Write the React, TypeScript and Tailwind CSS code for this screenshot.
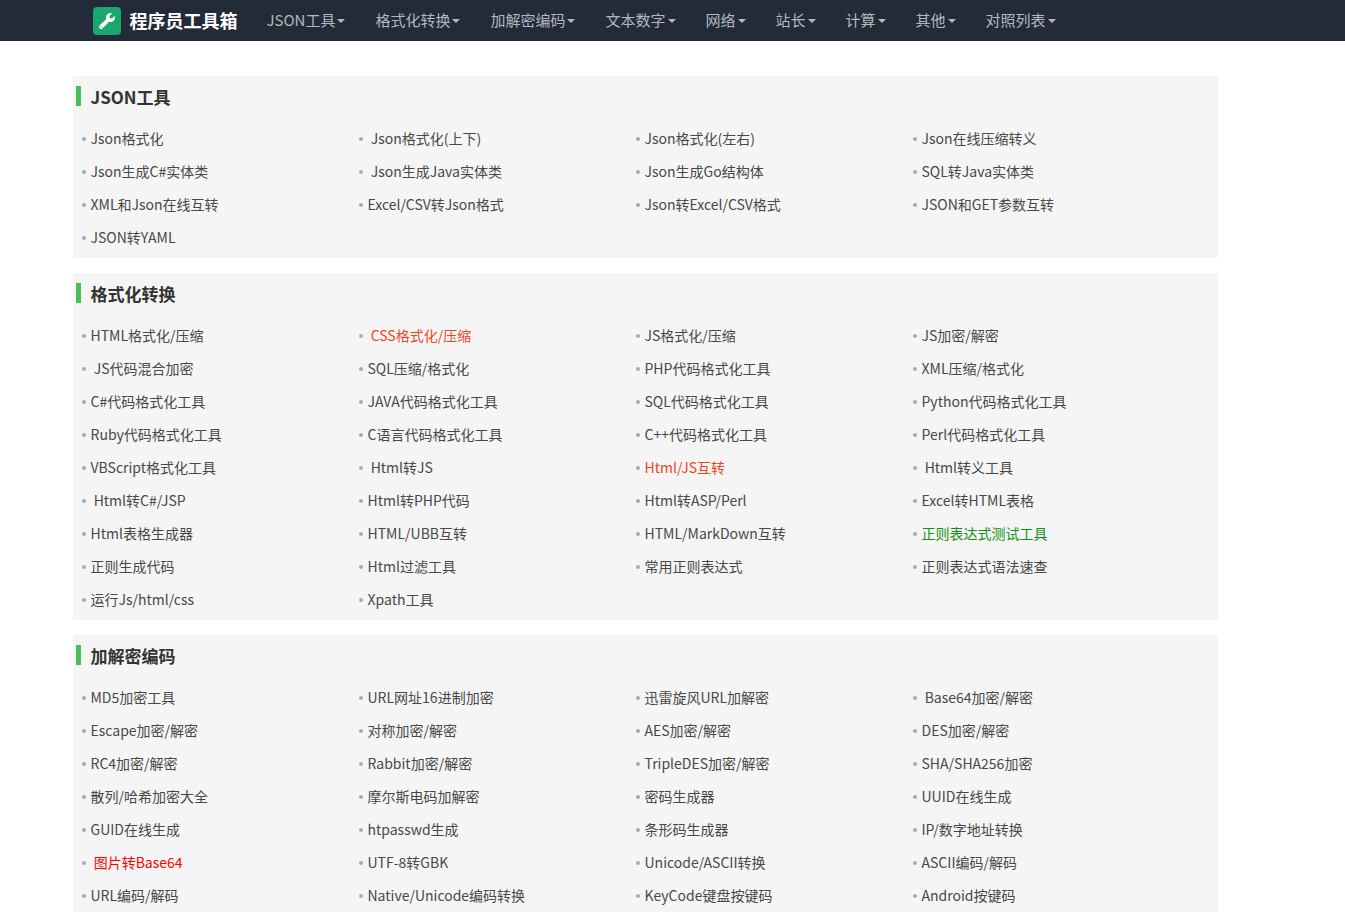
import { FaWrench } from 'react-icons/fa';

type Item = { text: string; color?: string };

const navItems = ['JSON工具', '格式化转换', '加解密编码', '文本数字', '网络', '站长', '计算', '其他', '对照列表'];

const sections: { title: string; items: Item[] }[] = [
  {
    title: 'JSON工具',
    items: [
      { text: 'Json格式化' },
      { text: ' Json格式化(上下)' },
      { text: 'Json格式化(左右)' },
      { text: 'Json在线压缩转义' },
      { text: 'Json生成C#实体类' },
      { text: ' Json生成Java实体类' },
      { text: 'Json生成Go结构体' },
      { text: 'SQL转Java实体类' },
      { text: 'XML和Json在线互转' },
      { text: 'Excel/CSV转Json格式' },
      { text: 'Json转Excel/CSV格式' },
      { text: 'JSON和GET参数互转' },
      { text: 'JSON转YAML' },
    ],
  },
  {
    title: '格式化转换',
    items: [
      { text: 'HTML格式化/压缩' },
      { text: ' CSS格式化/压缩', color: 'text-[#f2441c]' },
      { text: 'JS格式化/压缩' },
      { text: 'JS加密/解密' },
      { text: ' JS代码混合加密' },
      { text: 'SQL压缩/格式化' },
      { text: 'PHP代码格式化工具' },
      { text: 'XML压缩/格式化' },
      { text: 'C#代码格式化工具' },
      { text: 'JAVA代码格式化工具' },
      { text: 'SQL代码格式化工具' },
      { text: 'Python代码格式化工具' },
      { text: 'Ruby代码格式化工具' },
      { text: 'C语言代码格式化工具' },
      { text: 'C++代码格式化工具' },
      { text: 'Perl代码格式化工具' },
      { text: 'VBScript格式化工具' },
      { text: ' Html转JS' },
      { text: 'Html/JS互转', color: 'text-[#f2441c]' },
      { text: ' Html转义工具' },
      { text: ' Html转C#/JSP' },
      { text: 'Html转PHP代码' },
      { text: 'Html转ASP/Perl' },
      { text: 'Excel转HTML表格' },
      { text: 'Html表格生成器' },
      { text: 'HTML/UBB互转' },
      { text: 'HTML/MarkDown互转' },
      { text: '正则表达式测试工具', color: 'text-[#139113]' },
      { text: '正则生成代码' },
      { text: 'Html过滤工具' },
      { text: '常用正则表达式' },
      { text: '正则表达式语法速查' },
      { text: '运行Js/html/css' },
      { text: 'Xpath工具' },
    ],
  },
  {
    title: '加解密编码',
    items: [
      { text: 'MD5加密工具' },
      { text: 'URL网址16进制加密' },
      { text: '迅雷旋风URL加解密' },
      { text: ' Base64加密/解密' },
      { text: 'Escape加密/解密' },
      { text: '对称加密/解密' },
      { text: 'AES加密/解密' },
      { text: 'DES加密/解密' },
      { text: 'RC4加密/解密' },
      { text: 'Rabbit加密/解密' },
      { text: 'TripleDES加密/解密' },
      { text: 'SHA/SHA256加密' },
      { text: '散列/哈希加密大全' },
      { text: '摩尔斯电码加解密' },
      { text: '密码生成器' },
      { text: 'UUID在线生成' },
      { text: 'GUID在线生成' },
      { text: 'htpasswd生成' },
      { text: '条形码生成器' },
      { text: 'IP/数字地址转换' },
      { text: ' 图片转Base64', color: 'text-[#f00]' },
      { text: 'UTF-8转GBK' },
      { text: 'Unicode/ASCII转换' },
      { text: 'ASCII编码/解码' },
      { text: 'URL编码/解码' },
      { text: 'Native/Unicode编码转换' },
      { text: 'KeyCode键盘按键码' },
      { text: 'Android按键码' },
    ],
  },
];

function Navbar() {
  return (
    <nav className="h-[41px] bg-[#232b38]">
      <div className="w-[1200px] mx-auto h-full flex items-center pl-5">
        <a href="#" className="flex items-center gap-[9px] mr-[14px]">
          <span className="w-[28px] h-[28px] rounded-[4px] bg-[#1ba56f] flex items-center justify-center">
            <FaWrench className="text-white text-[16px]" />
          </span>
          <span className="text-white text-[18px] font-bold">程序员工具箱</span>
        </a>
        <ul className="flex items-center h-full">
          {navItems.map((item) => (
            <li key={item} className="flex items-center h-full px-[15px] text-[15px] text-[#b2b8bf]">
              {item}
              <span className="ml-[2px] mt-[1px] w-0 h-0 border-x-[4px] border-x-transparent border-t-[4px] border-t-[#b2b8bf]" />
            </li>
          ))}
        </ul>
      </div>
    </nav>
  );
}

export default function App() {
  return (
    <div className="min-h-screen bg-white font-['Noto_Sans_CJK_SC','Noto_Sans',sans-serif]">
      <Navbar />
      <main className="w-[1200px] mx-auto pt-[35px]">
        {sections.map((section) => (
          <section key={section.title} className="w-[1145px] bg-[#f5f5f5] mb-[15px] pt-[10px] pb-[4px]">
            <h2 className="flex items-center h-[20px] pl-[3px]">
              <span className="w-[5px] h-[20px] bg-[#4cbb5b]" />
              <span className="ml-[10px] text-[17px] font-bold text-[#333] leading-none">{section.title}</span>
            </h2>
            <ul className="grid grid-cols-[repeat(4,277px)] pl-[9px] mt-[16px]">
              {section.items.map((item, index) => (
                <li key={index} className="flex items-center h-[33px]">
                  <span className="w-[4px] h-[4px] rounded-full bg-[#aaa]" />
                  <a
                    href="#"
                    className={`ml-[5px] text-[14px] whitespace-pre ${item.color ?? 'text-[#484848]'}`}
                  >
                    {item.text}
                  </a>
                </li>
              ))}
            </ul>
          </section>
        ))}
      </main>
    </div>
  );
}
